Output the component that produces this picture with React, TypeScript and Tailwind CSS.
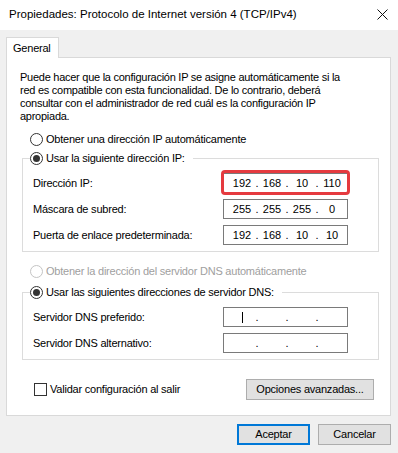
import React from "react";

const font = "font-['Liberation_Sans',Arial,sans-serif]";

function Radio({ checked, disabled }: { checked?: boolean; disabled?: boolean }) {
  return (
    <span
      className={`flex items-center justify-center w-[13px] h-[13px] rounded-full border bg-white shrink-0 ${
        disabled ? "border-[#c4c4c4]" : "border-[#333333]"
      }`}
    >
      {checked && <span className="block w-[7px] h-[7px] rounded-full bg-[#333333]" />}
    </span>
  );
}

function IpBox({ values, cursor }: { values: string[]; cursor?: boolean }) {
  return (
    <div className="w-[125px] h-[20px] border border-[#7a7a7a] bg-white flex items-center pl-[7px] leading-[18px] tracking-normal">
      {values.map((v, i) => (
        <React.Fragment key={i}>
          <span className="w-[22px] text-center flex items-center justify-center h-[18px]">
            {cursor && i === 0 ? <span className="block w-px h-[11px] bg-black" /> : v}
          </span>
          {i < 3 && <span className="w-[8px] text-center">.</span>}
        </React.Fragment>
      ))}
    </div>
  );
}

function Row({ label, children }: { label: string; children: React.ReactNode }) {
  return (
    <div className="flex items-center h-[20px]">
      <div className="w-[200px] pl-[10px]">{label}</div>
      {children}
    </div>
  );
}

export default function App() {
  return (
    <div
      className={`w-[398px] h-[453px] bg-[#f0f0f0] text-black text-[11px] tracking-[-0.22px] overflow-hidden ${font}`}
    >
      {/* Title bar */}
      <div className="h-[30px] bg-white flex items-center justify-between pl-[9px] pr-[10px]">
        <span className="text-[11.5px] tracking-normal">Propiedades: Protocolo de Internet versión 4 (TCP/IPv4)</span>
        <svg width="11" height="11" viewBox="0 0 11 11" className="mb-[1px]">
          <path d="M0.5 0.5 L10.5 10.5 M10.5 0.5 L0.5 10.5" stroke="#111" strokeWidth="1" fill="none" />
        </svg>
      </div>

      <div className="pl-[6px] pr-[7px] pt-[7px]">
        {/* Tab */}
        <div className="relative z-10 -mb-px w-[53px] h-[21px] bg-white border border-b-0 border-[#d9d9d9] pl-[6px] leading-[20px]">
          General
        </div>

        {/* Panel */}
        <div className="h-[359px] border border-[#d9d9d9] bg-white">
          <p className="pl-[13px] pt-[13px] leading-[13px] tracking-[-0.26px]">
            Puede hacer que la configuración IP se asigne automáticamente si la
            <br />
            red es compatible con esta funcionalidad. De lo contrario, deberá
            <br />
            consultar con el administrador de red cuál es la configuración IP
            <br />
            apropiada.
          </p>

          <div className="mt-[8px] ml-[23px] h-[16px] flex items-center gap-[3px]">
            <Radio />
            <span>Obtener una dirección IP automáticamente</span>
          </div>

          <fieldset className="mt-[3px] ml-[15px] mr-[11px] border border-[#dcdcdc]">
            <legend className="ml-[7px] pr-[8px]">
              <div className="h-[16px] flex items-center gap-[3px]">
                <Radio checked />
                <span>Usar la siguiente dirección IP:</span>
              </div>
            </legend>
            <div className="pt-[7px] pb-[6px] flex flex-col gap-[6px]">
              <Row label="Dirección IP:">
                <div className="relative">
                  <IpBox values={["192", "168", "10", "110"]} />
                  <div className="absolute -top-[3px] -bottom-[2px] -left-[2px] -right-[2px] border-[3px] border-[#e53a3f] rounded-[4px]" />
                </div>
              </Row>
              <Row label="Máscara de subred:">
                <IpBox values={["255", "255", "255", "0"]} />
              </Row>
              <Row label="Puerta de enlace predeterminada:">
                <IpBox values={["192", "168", "10", "10"]} />
              </Row>
            </div>
          </fieldset>

          <div className="mt-[11px] ml-[23px] h-[16px] flex items-center gap-[3px] text-[#a0a0a0]">
            <Radio disabled />
            <span>Obtener la dirección del servidor DNS automáticamente</span>
          </div>

          <fieldset className="mt-[5px] ml-[15px] mr-[11px] border border-[#dcdcdc]">
            <legend className="ml-[7px] pr-[8px]">
              <div className="h-[16px] flex items-center gap-[3px]">
                <Radio checked />
                <span>Usar las siguientes direcciones de servidor DNS:</span>
              </div>
            </legend>
            <div className="pt-[7px] pb-[6px] flex flex-col gap-[6px]">
              <Row label="Servidor DNS preferido:">
                <IpBox values={["", "", "", ""]} cursor />
              </Row>
              <Row label="Servidor DNS alternativo:">
                <IpBox values={["", "", "", ""]} />
              </Row>
            </div>
          </fieldset>

          <div className="mt-[19px] h-[21px] pl-[27px] pr-[16px] flex items-center justify-between">
            <div className="flex items-center gap-[3px]">
              <span className="block w-[13px] h-[13px] border border-[#333333] bg-white" />
              <span>Validar configuración al salir</span>
            </div>
            <div className="w-[128px] h-[21px] bg-[#e1e1e1] border border-[#adadad] flex items-center justify-center">
              Opciones avanzadas...
            </div>
          </div>
        </div>

        {/* Dialog buttons */}
        <div className="mt-[8px] flex justify-end gap-[8px]">
          <div className="w-[73px] h-[21px] bg-[#e1e1e1] border-2 border-[#0078d7] flex items-center justify-center">
            Aceptar
          </div>
          <div className="w-[73px] h-[21px] bg-[#e1e1e1] border border-[#adadad] flex items-center justify-center">
            Cancelar
          </div>
        </div>
      </div>
    </div>
  );
}
